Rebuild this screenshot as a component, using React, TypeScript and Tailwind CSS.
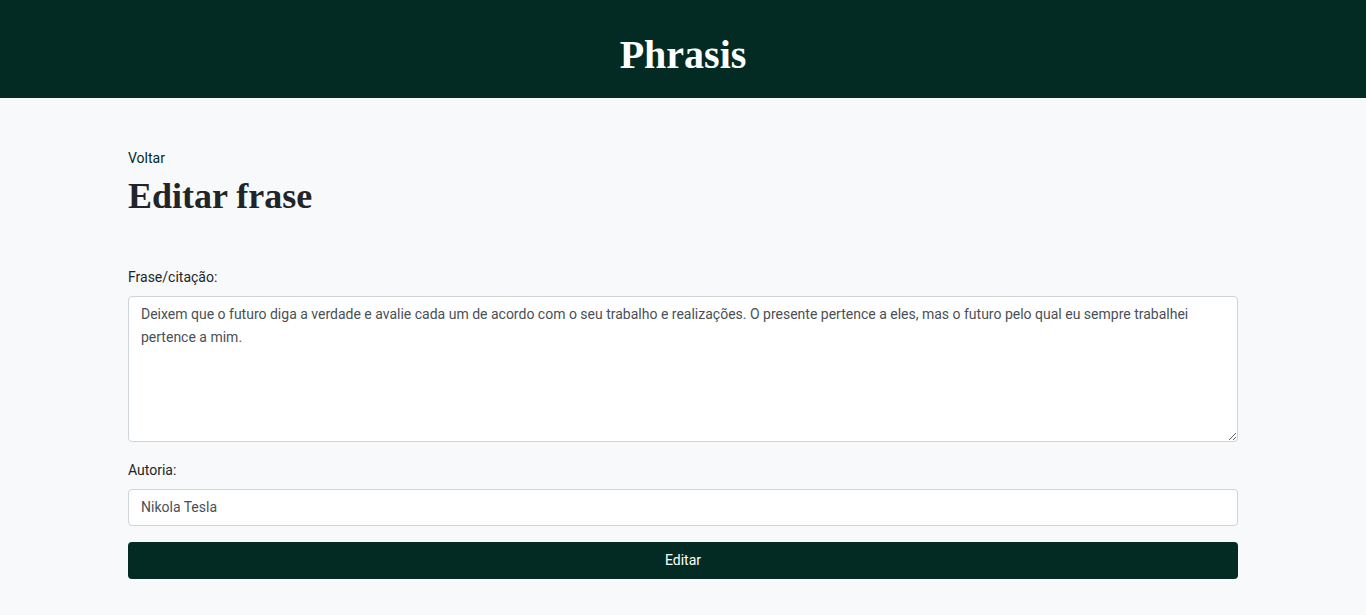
export default function App() {
  return (
    <div className="min-h-screen bg-[#f8f9fa] font-['Roboto',sans-serif] text-sm text-[#212529]">
      <header className="h-[98px] bg-[#032b23] flex items-center justify-center">
        <h1 className="font-['Liberation_Serif',serif] font-bold text-[40px] leading-none text-white pt-[11px]">
          Phrasis
        </h1>
      </header>
      <main className="w-[1110px] mx-auto pt-[50px]">
        <a className="block leading-[21px] text-[#032b23]">Voltar</a>
        <h2 className="font-['Liberation_Serif',serif] font-bold text-[36px] leading-[43px] mt-[6px] text-[#212529]">
          Editar frase
        </h2>
        <form className="mt-[49px]">
          <div className="mb-[18px]">
            <label className="block leading-[21px] mb-2">Frase/citação:</label>
            <textarea
              className="block w-full h-[146px] rounded border border-[#ced4da] bg-white px-3 py-[6px] leading-[23px] text-[#495057] outline-none"
              defaultValue="Deixem que o futuro diga a verdade e avalie cada um de acordo com o seu trabalho e realizações. O presente pertence a eles, mas o futuro pelo qual eu sempre trabalhei pertence a mim."
            />
          </div>
          <div className="mb-4">
            <label className="block leading-[21px] mb-2">Autoria:</label>
            <input
              className="block w-full h-[37px] rounded border border-[#ced4da] bg-white px-3 pb-[2px] text-[#495057] outline-none"
              defaultValue="Nikola Tesla"
            />
          </div>
          <button
            type="button"
            className="block w-full h-[37px] rounded bg-[#032b23] pb-[2px] text-white"
          >
            Editar
          </button>
        </form>
      </main>
    </div>
  );
}
